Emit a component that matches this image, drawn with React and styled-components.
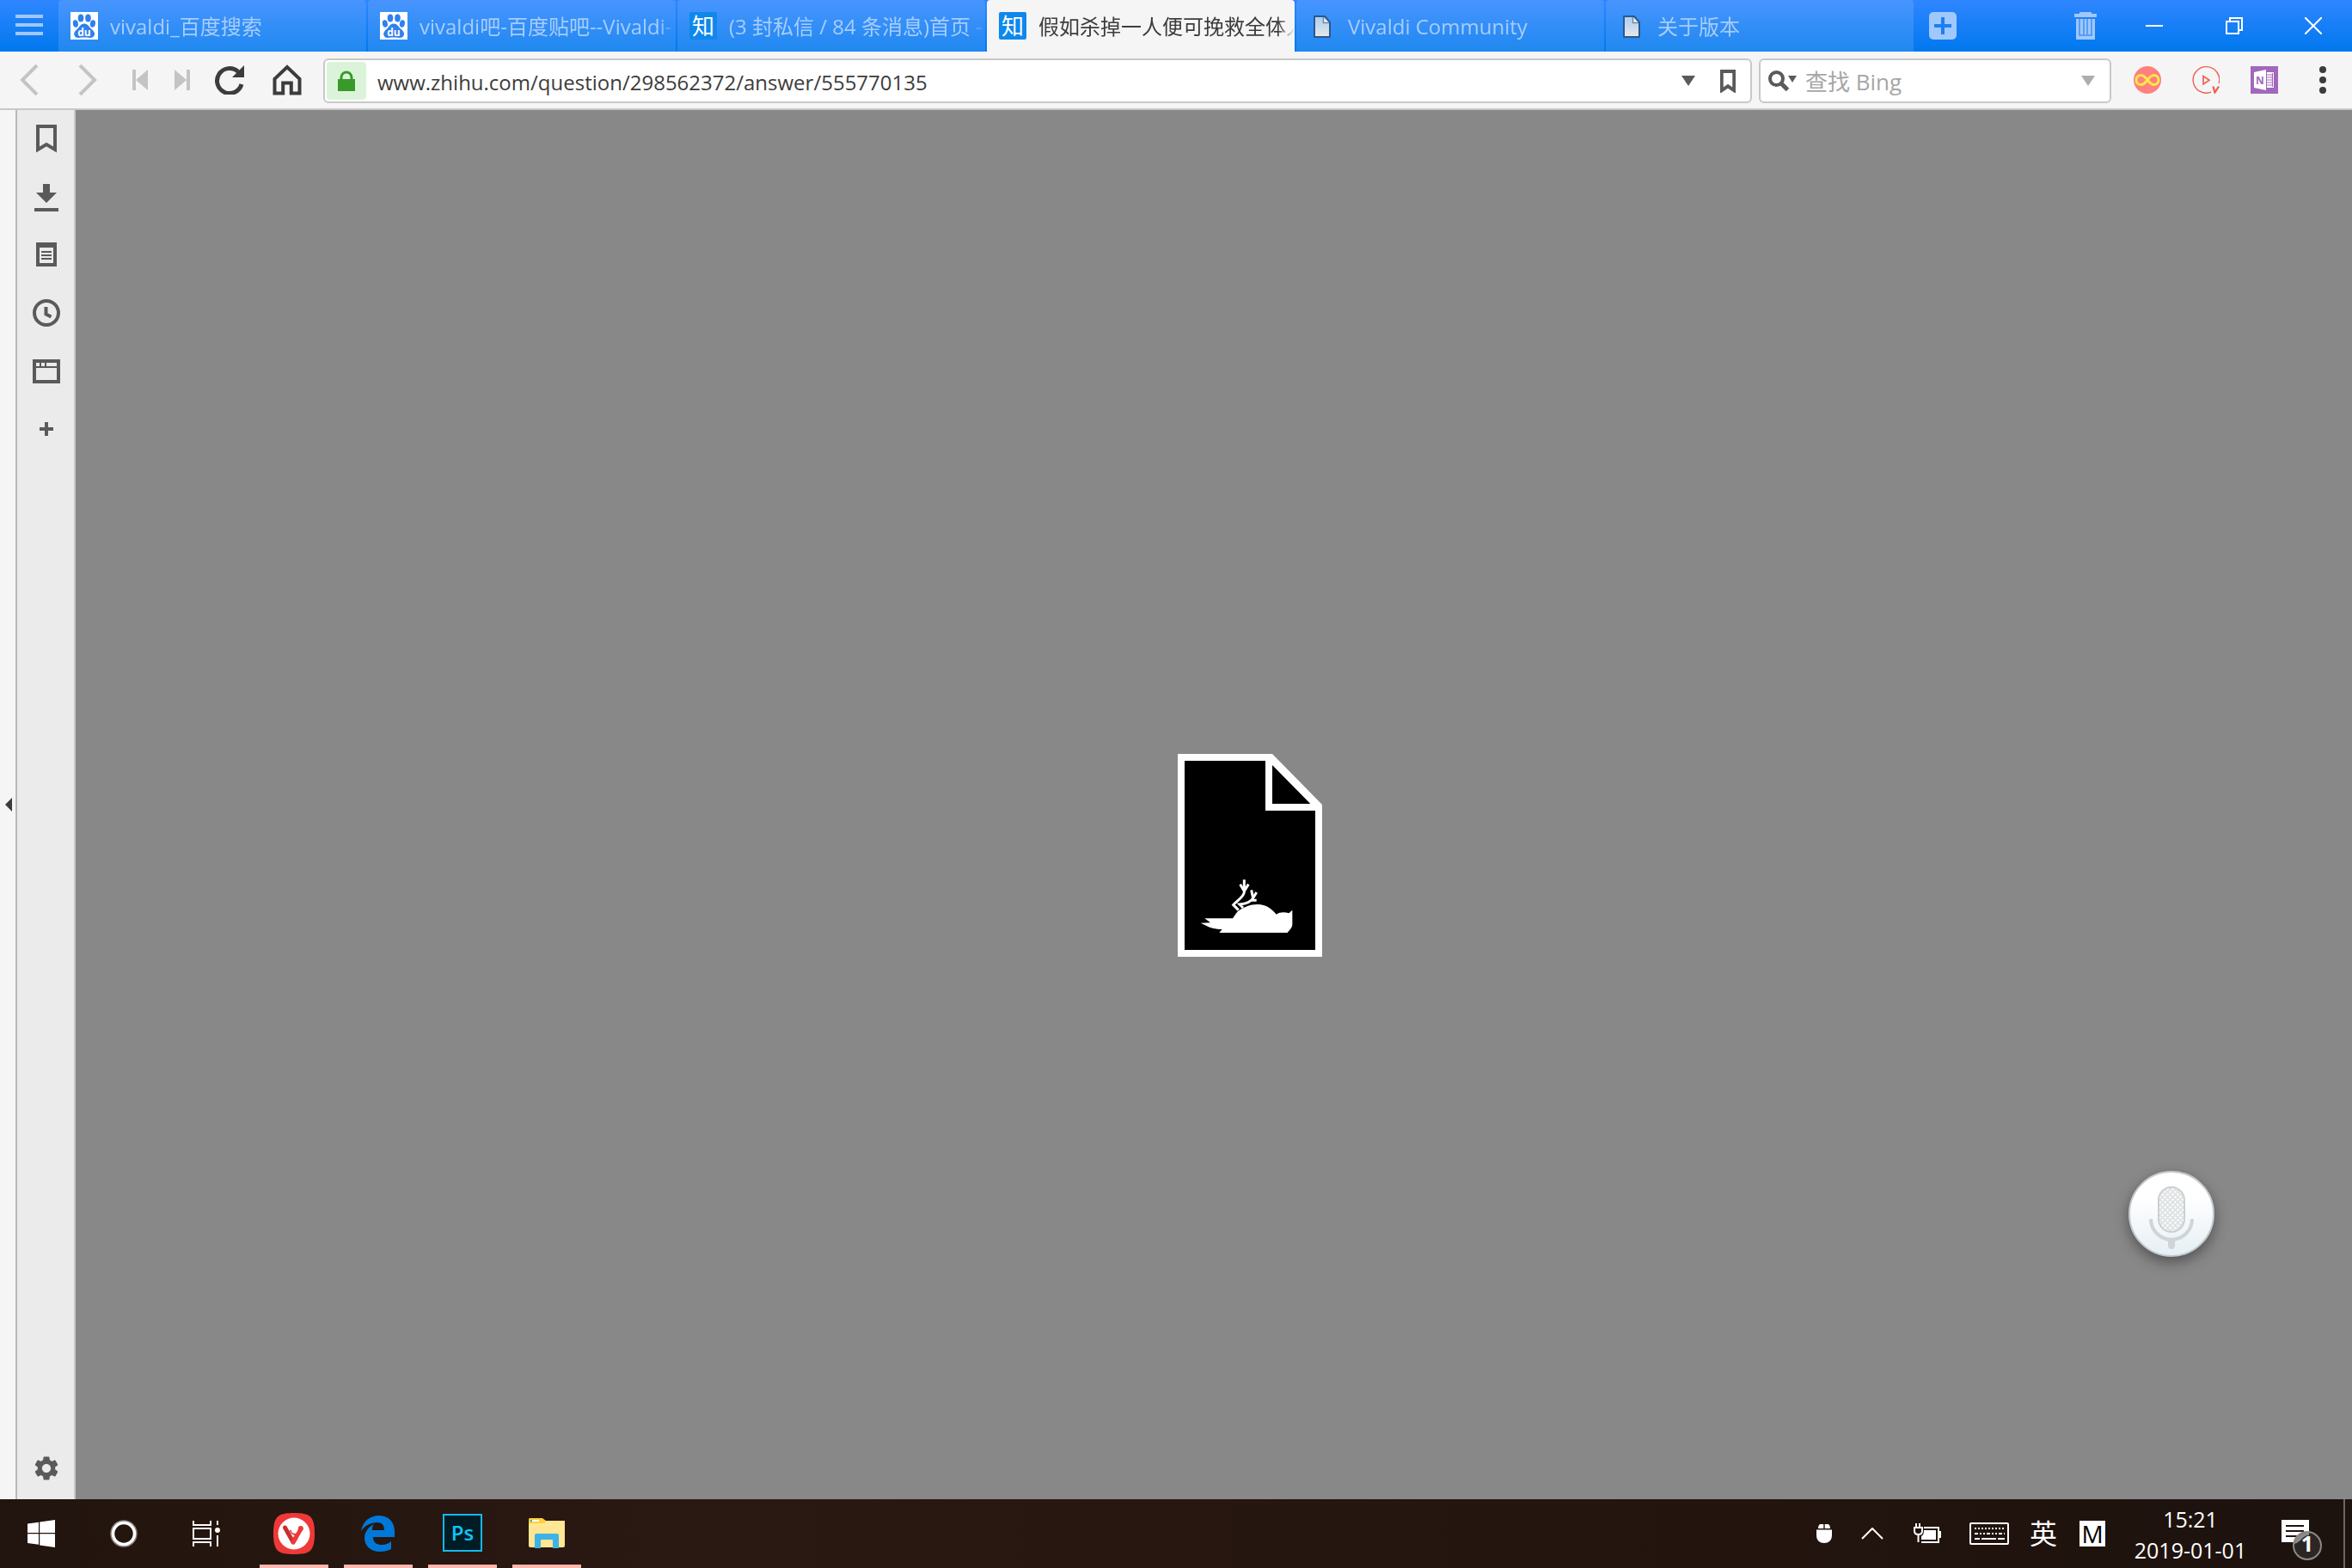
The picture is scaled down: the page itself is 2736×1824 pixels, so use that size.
import React from "react";
import styled, { createGlobalStyle, css } from "styled-components";
import { MdSettings } from "react-icons/md";

const GlobalStyle = createGlobalStyle`
  * { box-sizing: border-box; }
  body {
    margin: 0;
    font-family: "Open Sans", "Noto Sans CJK SC", sans-serif;
    font-size: 24px;
    color: #3c3c3c;
    background: #888;
  }
  button, input { font: inherit; color: inherit; }
  svg { display: block; flex: none; }
`;

const Screen = styled.div`
  min-height: 100vh;
  display: flex;
  flex-direction: column;
`;

/* ---------- tab bar ---------- */

const TabBar = styled.header`
  display: flex;
  height: 60px;
  background: linear-gradient(#2f86ff, #0078ee);
`;

const IconButton = styled.button`
  display: flex;
  align-items: center;
  justify-content: center;
  flex: none;
  width: ${(p) => p.$width || 68}px;
  height: ${(p) => (p.$height ? `${p.$height}px` : "auto")};
  padding: 0;
  border: 0;
  background: none;
  color: ${(p) => p.$color || "inherit"};
`;

const Tabs = styled.nav`
  display: flex;
  gap: 2px;
  min-width: 0;
`;

const Tab = styled.button`
  display: flex;
  align-items: center;
  gap: 14px;
  flex: 0 1 358px;
  width: 358px;
  min-width: 0;
  padding: 0 0 0 14px;
  border: 0;
  border-radius: 4px 4px 0 0;
  text-align: left;
  background: rgba(255, 255, 255, 0.12);
  color: #a6cdfb;
  ${(p) =>
    p.$active &&
    css`
      background: #f5f5f5;
      color: #3c3c3c;
    `}
`;

const TabTitle = styled.span`
  flex: 1;
  min-width: 0;
  overflow: hidden;
  white-space: nowrap;
  padding-top: 2px;
  line-height: 40px;
  mask-image: linear-gradient(to right, #000 calc(100% - 20px), transparent);
`;

const ZhihuMark = styled.span`
  display: flex;
  align-items: center;
  justify-content: center;
  flex: none;
  width: 32px;
  height: 32px;
  border-radius: 2px;
  background: #0f88eb;
  color: #fff;
  font-size: 26px;
  line-height: 32px;
`;

const Spacer = styled.div`
  flex: 1;
`;

/* ---------- toolbar ---------- */

const Toolbar = styled.div`
  display: flex;
  align-items: stretch;
  height: 68px;
  background: #f5f5f5;
  border-bottom: 2px solid #c8c8c8;
`;

const Field = styled.label`
  display: flex;
  align-items: center;
  height: 52px;
  margin: 8px 0 6px 8px;
  padding: 2px;
  border: 2px solid #c8c8c8;
  border-radius: 6px;
  background: #fff;
  flex: 1 1 0;
  min-width: 0;
`;

const SearchField = styled(Field)`
  flex: 0 0 410px;
  margin-right: 8px;
  font-size: 26px;
`;

const SecureBadge = styled.span`
  display: flex;
  align-items: center;
  justify-content: center;
  flex: none;
  width: 46px;
  height: 44px;
  border-radius: 4px;
  background: #dbf4d9;
`;

const TextInput = styled.input`
  flex: 1;
  min-width: 0;
  height: 44px;
  padding: 2px 0 0 ${(p) => p.$indent}px;
  border: 0;
  outline: 0;
  background: none;
  &::placeholder { color: #a6a6a6; opacity: 1; }
`;

/* ---------- body ---------- */

const Body = styled.div`
  flex: 1;
  display: flex;
`;

const PanelToggle = styled.button`
  display: flex;
  align-items: center;
  flex: none;
  width: 20px;
  padding: 0 0 0 6px;
  border: 0;
  border-right: 2px solid #b8b8b8;
  background: #f5f5f5;
`;

const Panel = styled.aside`
  display: flex;
  flex-direction: column;
  flex: none;
  gap: 4px;
  width: 68px;
  padding-bottom: 4px;
  border-right: 2px solid #c8c8c8;
  background: #ebebeb;
  color: #5a5a5a;
`;

const Page = styled.main`
  position: relative;
  flex: 1;
  display: flex;
  align-items: center;
  justify-content: center;
  padding: 118px 0 0 84px;
  background: #888;
`;

const MicButton = styled.button`
  position: absolute;
  right: 160px;
  bottom: 282px;
  width: 100px;
  height: 100px;
  padding: 0;
  border: 2px solid #c3c9ce;
  border-radius: 50%;
  background: linear-gradient(#fff 30%, #e6eff4);
  box-shadow: 0 6px 16px rgba(0, 0, 0, 0.4);
`;

/* ---------- taskbar ---------- */

const Taskbar = styled.footer`
  display: flex;
  height: 80px;
  background: linear-gradient(to right, #22140e, #2a1912 30%, #23140e 75%, #1c120e);
  color: #fff;
`;

const RunningApps = styled.div`
  display: flex;
  gap: 18px;
  padding-left: 14px;
`;

const AppButton = styled.button`
  display: flex;
  align-items: center;
  justify-content: center;
  width: 80px;
  padding: 4px 0 0;
  border: 0;
  border-bottom: 4px solid #ffb6ad;
  background: none;
`;

const PhotoshopMark = styled.span`
  display: flex;
  align-items: center;
  justify-content: center;
  width: 46px;
  height: 44px;
  margin-bottom: 2px;
  border: 2px solid #14b9ee;
  background: #001d26;
  color: #10c4f8;
  font-weight: 600;
  line-height: 36px;
`;

const ImeText = styled.span`
  font-size: 32px;
  line-height: 40px;
`;

const ImeBox = styled.span`
  display: block;
  width: 30px;
  height: 30px;
  background: #fff;
  color: #000;
  font-size: 28px;
  line-height: 30px;
  text-align: center;
`;

const Clock = styled.button`
  flex: none;
  width: 160px;
  padding: 2px 0 0;
  border: 0;
  background: none;
  font-size: 25px;
  line-height: 36px;
  text-align: center;
`;

const ShowDesktop = styled.button`
  width: 10px;
  margin-left: 14px;
  padding: 0;
  border: 0;
  border-left: 2px solid #6d6562;
  background: none;
`;

/* ---------- drawings ---------- */

const Baidu = () => (
  <svg width="32" height="32" viewBox="0 0 32 32">
    <path fill="#fff" d="M0 0h32v32H0z" />
    <g fill="#2f80ee">
      <ellipse cx="12" cy="7" rx="3.3" ry="4.6" />
      <ellipse cx="20.500" cy="7" rx="3.300" ry="4.600" />
      <ellipse cx="5.800" cy="13.500" rx="3" ry="4.300" transform="rotate(-10 6 13)" />
      <ellipse cx="26" cy="13.500" rx="3" ry="4.300" transform="rotate(10 26 13)" />
      <path d="M16 13.500c4 0 5.500 3.500 8 6 3.500 3 5 5 3.500 8-1.500 2.800-4 2.500-6.500 2.200-3.500-.4-6.500-.4-10 0-2.500.3-5 .6-6.300-2.200-1.300-3 .2-5 3.500-8 2.400-2.500 3.800-6 7.800-6z" />
    </g>
    <text x="16" y="27.500" fill="#fff" fontSize="12" fontWeight="700" textAnchor="middle" fontFamily="Open Sans">du</text>
  </svg>
);

const PageIcon = () => (
  <svg width="32" height="32" viewBox="0 0 32 32">
    <defs>
      <linearGradient id="sheet" x2="0" y2="1">
        <stop stopColor="#a9cdf3" />
        <stop offset="1" stopColor="#e8e8e8" />
      </linearGradient>
    </defs>
    <path d="M7 5h12l6 7v17H7z" fill="url(#sheet)" stroke="#2b5889" strokeWidth="2" strokeLinejoin="round" />
    <path d="M17.500 6v6.500H24" fill="#f3f3f3" stroke="#6f89a5" strokeWidth="1.500" />
  </svg>
);

const Triangle = ({ w, h, color }) => (
  <svg width={w} height={h} viewBox="0 0 16 12" preserveAspectRatio="none">
    <path d="M0 0h16L8 12z" fill={color} />
  </svg>
);

const Chevron = ({ flip }) => (
  <svg width="24" height="36" viewBox="0 0 24 36" transform={flip ? "scale(-1 1)" : undefined}>
    <path d="M21 1L4 18l17 17" fill="none" stroke="#c4c4c4" strokeWidth="4" />
  </svg>
);

const Skip = ({ flip }) => (
  <svg width="18" height="24" viewBox="0 0 18 24" transform={flip ? "scale(-1 1)" : undefined}>
    <path d="M0 0h4v24H0zM18 0v24L4 12z" fill="#c4c4c4" />
  </svg>
);

const Reload = () => (
  <svg width="34" height="34" viewBox="0 0 34 34">
    <path d="M27 7.500A14.500 14.500 0 1 0 31 22" fill="none" stroke="#3c3c3c" strokeWidth="5" />
    <path d="M34 0v14H20z" fill="#3c3c3c" />
  </svg>
);

const Home = () => (
  <svg width="36" height="36" viewBox="0 0 36 36">
    <path d="M3.500 33.500V16.800L18 3l14.500 13.800v16.700h-9.700v-12h-9.600v12z" fill="none" stroke="#3c3c3c" strokeWidth="4" />
  </svg>
);

const Lock = () => (
  <svg width="20" height="24" viewBox="0 0 20 24">
    <path d="M4 12V8a6 6 0 0 1 12 0v4" fill="none" stroke="#379a29" strokeWidth="3" />
    <path d="M0 10h20v14H0z" fill="#379a29" />
  </svg>
);

const BookmarkOutline = ({ w, h }) => (
  <svg width={w} height={h} viewBox="0 0 24 33" preserveAspectRatio="none">
    <path d="M2.500 2.500h19v27l-9.500-6-9.500 6z" fill="none" stroke="#5a5a5a" strokeWidth="5" />
  </svg>
);

const SearchIcon = () => (
  <svg width="34" height="24" viewBox="0 0 34 24">
    <circle cx="9.500" cy="9.500" r="7.500" fill="none" stroke="#5a5a5a" strokeWidth="4" />
    <path d="M14 14l8.500 8.500" stroke="#5a5a5a" strokeWidth="5" />
    <path d="M23 6h10l-5 8z" fill="#5a5a5a" />
  </svg>
);

const panelIcons = [
  ["书签", <svg key="a" width="32" height="36" viewBox="0 0 32 36"><path d="M6 5h20v27l-10-6-10 6z" fill="none" stroke="currentColor" strokeWidth="4" /></svg>],
  ["下载", <svg key="b" width="32" height="36" viewBox="0 0 32 36" fill="currentColor"><path d="M12 4h8v10h8L16 26 4 14h8zM2 32h28v4H2z" /></svg>],
  ["笔记", <svg key="c" width="32" height="36" viewBox="0 0 32 36"><path d="M6 6h20v24H6z" fill="none" stroke="currentColor" strokeWidth="4" /><path d="M6 9h20M10 15h12M10 19h12M10 23h12" stroke="currentColor" strokeWidth="2" /></svg>],
  ["历史", <svg key="d" width="32" height="36" viewBox="0 0 32 36" fill="none" stroke="currentColor" strokeWidth="4"><circle cx="16" cy="18" r="14" /><path d="M15.500 11v8.500l6 3" /></svg>],
  ["窗口", <svg key="e" width="32" height="36" viewBox="0 0 32 36"><path d="M2 6h28v24H2z" fill="none" stroke="currentColor" strokeWidth="4" /><path d="M2 13h28M9 6v7M15 6v7" stroke="currentColor" strokeWidth="2" /></svg>],
  ["添加网页面板", <svg key="f" width="32" height="36" viewBox="0 0 32 36"><path d="M8 17h16M16 9v16" stroke="currentColor" strokeWidth="4" /></svg>],
];

const DeadBird = () => (
  <svg width="168" height="236" viewBox="90 81 504 708">
    <path d="M90 81h330l174 177v531H90z" fill="#fff" />
    <path d="M114 105h282v174h174v486H114zM420 120v135h133z" fill="#000" />
    <path d="M170 671l34-1-20-15 98 0c6-8 10-16 18-25 20-14 42-24 68-24 32 0 50 16 66 35 14-9 28-9 44-4l12-11v50c0 12-10 20-17 29H235l10-12c-24-1-40-4-56-13z" fill="#fff" />
    <g fill="none" stroke="#fff" strokeWidth="9">
      <path d="M302 626l-18-18c10-14 34-24 38-44v-44M308 536l14 24 15-24" />
      <path d="M318 618l-12-12c20-2 40-8 47-22l-6-28M353 584l12-20M345 592h20" />
    </g>
  </svg>
);

const Mic = () => (
  <svg width="96" height="96" viewBox="0 0 96 96">
    <defs>
      <pattern id="grille" width="6" height="6" patternUnits="userSpaceOnUse">
        <path fill="#dfe3e4" d="M0 0h6v6H0z" />
        <circle cx="1.500" cy="1.500" r="1.200" fill="#fff" />
        <circle cx="4.500" cy="4.500" r="1.200" fill="#fff" />
      </pattern>
    </defs>
    <rect x="33" y="17" width="30" height="52" rx="15" fill="url(#grille)" stroke="#cbcfd1" strokeWidth="2" />
    <path d="M24 54a24 24 0 0 0 48 0" fill="none" stroke="#cfd4d7" strokeWidth="4" />
    <path d="M44 78h8v7a4 4 0 0 1-8 0z" fill="#cfd4d7" />
  </svg>
);

const InfinityLoop = () => (
  <svg width="32" height="32" viewBox="0 0 32 32">
    <circle cx="16" cy="16" r="16" fill="#ff8080" />
    <path d="M16 16c-3-4-5-5.500-7.500-5.500a5.500 5.500 0 0 0 0 11c2.500 0 4.500-1.500 7.500-5.500s5-5.500 7.500-5.500a5.500 5.500 0 0 1 0 11c-2.500 0-4.500-1.500-7.500-5.500z" fill="none" stroke="#ffe748" strokeWidth="3" />
  </svg>
);

const PlayV = () => (
  <svg width="32" height="32" viewBox="0 0 32 32">
    <path d="M31.200 20A15.300 15.300 0 1 0 22 30.200" fill="none" stroke="#ee604f" strokeWidth="1.400" />
    <path d="M13 11.500v9.500l7-4.700z" fill="none" stroke="#ee604f" strokeWidth="1.700" />
    <path d="M24.500 23.500l2 7 4.500-7" fill="none" stroke="#ee604f" strokeWidth="2.300" />
  </svg>
);

const OneNote = () => (
  <svg width="32" height="32" viewBox="0 0 32 32">
    <path fill="#a168bd" d="M0 0h32v32H0z" />
    <path d="M4 7l14-3v24L4 25z" fill="#fff" />
    <path d="M19 7h8v18h-8" fill="#fff" />
    <path d="M19 10h6M19 13h6M19 16h6M19 19h6M19 22h6M25.500 8v16" stroke="#a168bd" strokeWidth="1.200" />
    <text x="11" y="20.500" textAnchor="middle" fontSize="12" fontWeight="700" fill="#a168bd" fontFamily="Open Sans">N</text>
  </svg>
);

const Edge = () => (
  <svg width="40" height="42" viewBox="0 0 40 42">
    <path d="M0 18C2 7 10 0 21 0c12 0 18 9 18 18v7H14c0 7 5 9 10 9s9-2 11-4v9c-4 2-8 3-13 3C11 42 4 35 4 26c0-7 5-13 11-16-2 2-2 5-2 7h14c0-6-3-9-8-9C11 8 4 12 0 18z" fill="#0078d9" />
  </svg>
);

const Vivaldi = () => (
  <svg width="48" height="48" viewBox="0 0 48 48">
    <path d="M24 0c18 0 24 3 24 24s-6 24-24 24S0 45 0 24 6 0 24 0z" fill="#ef3939" />
    <circle cx="24" cy="24" r="18.500" fill="#fff" />
    <path d="M13.500 17l9.500 17 3.500-6" fill="none" stroke="#c8302f" strokeWidth="5" strokeLinecap="round" strokeLinejoin="round" />
    <path d="M23 34l9-15.500" stroke="#ef3939" strokeWidth="5" strokeLinecap="round" />
    <path d="M19.500 20c2 4 4 5 6.500 5 4 0 6-3 5-6" fill="none" stroke="#ef3939" strokeWidth="2" />
    <circle cx="31.800" cy="18" r="3" fill="#ef3939" />
    <circle cx="24.300" cy="20" r="3.500" fill="#fff" />
  </svg>
);

const Folder = () => (
  <svg width="42" height="36" viewBox="0 0 42 36">
    <path d="M0 3h42v29a2 2 0 0 1-2 2H2a2 2 0 0 1-2-2z" fill="#ffe693" />
    <path d="M1 0h15l4 3-2 3H0V1z" fill="#ffcf3a" />
    <path d="M4 3h8" stroke="#fff" strokeWidth="2" />
    <path d="M2 3h2" stroke="#2eaadc" strokeWidth="2" />
    <path d="M7 35V20a2 2 0 0 1 2-2h24a2 2 0 0 1 2 2v15h-7V25H14v10z" fill="#3cb3e4" />
  </svg>
);

const tabs = [
  { title: "vivaldi_百度搜索", icon: <Baidu /> },
  { title: "vivaldi吧-百度贴吧--Vivaldi-", icon: <Baidu /> },
  { title: "(3 封私信 / 84 条消息)首页 -", icon: <ZhihuMark>知</ZhihuMark> },
  { title: "假如杀掉一人便可挽救全体人", icon: <ZhihuMark>知</ZhihuMark>, active: true },
  { title: "Vivaldi Community", icon: <PageIcon /> },
  { title: "关于版本", icon: <PageIcon /> },
];

export default function App() {
  return (
    <Screen>
      <GlobalStyle />
      <TabBar>
        <IconButton aria-label="菜单" $color="#a0c8fa">
          <svg width="32" height="26" viewBox="0 0 32 26"><path d="M0 2h32M0 12h32M0 22h32" stroke="currentColor" strokeWidth="4" /></svg>
        </IconButton>
        <Tabs>
          {tabs.map((t) => (
            <Tab key={t.title} $active={t.active}>
              {t.icon}
              <TabTitle>{t.title}</TabTitle>
            </Tab>
          ))}
        </Tabs>
        <IconButton aria-label="新标签页" $color="#a0c8fa">
          <svg width="32" height="32" viewBox="0 0 32 32"><rect width="32" height="32" rx="5" fill="currentColor" /><path d="M6 16h20M16 6v20" stroke="#1a7ff8" strokeWidth="4" /></svg>
        </IconButton>
        <Spacer />
        <IconButton aria-label="已关闭的标签页" $color="#a0c8fa">
          <svg width="26" height="32" viewBox="0 0 26 32">
            <path d="M6 0h14v2h6v4H0V2h6zM2 8h22v24H2z" fill="currentColor" />
            <path d="M6 8v19h14V8M11 8v18M15 8v18" fill="none" stroke="#3f90f7" strokeWidth="1.500" />
          </svg>
        </IconButton>
        <IconButton aria-label="最小化" $width={92} $color="#fff">
          <svg width="20" height="20" viewBox="0 0 20 20"><path d="M0 10h20" stroke="currentColor" strokeWidth="2" /></svg>
        </IconButton>
        <IconButton aria-label="还原" $width={94} $color="#fff">
          <svg width="20" height="20" viewBox="0 0 20 20"><path d="M1 5h14v14H1zM5 5V1h14v14h-4" fill="none" stroke="currentColor" strokeWidth="2" /></svg>
        </IconButton>
        <IconButton aria-label="关闭" $width={90} $color="#fff">
          <svg width="20" height="20" viewBox="0 0 20 20"><path d="M0 0l20 20M20 0L0 20" stroke="currentColor" strokeWidth="2" /></svg>
        </IconButton>
      </TabBar>

      <Toolbar>
        <IconButton aria-label="后退"><Chevron /></IconButton>
        <IconButton aria-label="前进"><Chevron flip /></IconButton>
        <IconButton aria-label="快退" $width={54}><Skip /></IconButton>
        <IconButton aria-label="快进" $width={44}><Skip flip /></IconButton>
        <IconButton aria-label="重新加载" $width={66}><Reload /></IconButton>
        <IconButton aria-label="主页"><Home /></IconButton>
        <Field>
          <SecureBadge><Lock /></SecureBadge>
          <TextInput $indent={13} aria-label="地址" defaultValue="www.zhihu.com/question/298562372/answer/555770135" />
          <IconButton as="span" $width={44}><Triangle w={16} h={12} color="#5a5a5a" /></IconButton>
          <IconButton as="span" $width={48}><BookmarkOutline w={18} h={27} /></IconButton>
        </Field>
        <SearchField>
          <IconButton as="span" $width={48}><SearchIcon /></IconButton>
          <TextInput $indent={2} aria-label="搜索" placeholder="查找 Bing" />
          <IconButton as="span" $width={46}><Triangle w={16} h={12} color="#adadad" /></IconButton>
        </SearchField>
        <IconButton aria-label="扩展"><InfinityLoop /></IconButton>
        <IconButton aria-label="视频扩展"><PlayV /></IconButton>
        <IconButton aria-label="OneNote"><OneNote /></IconButton>
        <IconButton aria-label="更多">
          <svg width="8" height="32" viewBox="0 0 8 32" fill="#3c3c3c"><circle cx="4" cy="4" r="4" /><circle cx="4" cy="16" r="4" /><circle cx="4" cy="28" r="4" /></svg>
        </IconButton>
      </Toolbar>

      <Body>
        <PanelToggle aria-label="切换面板">
          <svg width="8" height="16" viewBox="0 0 8 16"><path d="M8 0v16L0 8z" fill="#3c3c3c" /></svg>
        </PanelToggle>
        <Panel>
          {panelIcons.map(([label, icon]) => (
            <IconButton key={label} aria-label={label} $height={64}>{icon}</IconButton>
          ))}
          <Spacer />
          <IconButton aria-label="设置" $height={64}><MdSettings size={34} /></IconButton>
        </Panel>
        <Page>
          <DeadBird />
          <MicButton aria-label="语音"><Mic /></MicButton>
        </Page>
      </Body>

      <Taskbar>
        <IconButton aria-label="开始" $width={96}>
          <svg width="32" height="32" viewBox="0 0 32 32" fill="#fff"><path d="M0 4.500L13 2.700V15H0zM14.200 2.500L32 0v15H14.200zM0 16.200h13v12.600L0 27zM14.200 16.200H32V32l-17.800-2.500z" /></svg>
        </IconButton>
        <IconButton aria-label="Cortana" $width={96}>
          <svg width="32" height="32" viewBox="0 0 32 32" fill="none"><circle cx="16" cy="16" r="14" stroke="#8a8380" strokeWidth="3.500" /><circle cx="16" cy="16" r="12.500" stroke="#fff" strokeWidth="3.500" /></svg>
        </IconButton>
        <IconButton aria-label="任务视图" $width={96}>
          <svg width="32" height="30" viewBox="0 0 32 30" fill="none" stroke="#fff" strokeWidth="2"><path d="M1 0v5h20V0M1 9h20v12H1zM1 30v-5h20v5M29 0v5M29 17v13" /><circle cx="29" cy="11" r="3" fill="#fff" stroke="none" /></svg>
        </IconButton>
        <RunningApps>
          <AppButton aria-label="Vivaldi"><Vivaldi /></AppButton>
          <AppButton aria-label="Edge"><Edge /></AppButton>
          <AppButton aria-label="Photoshop"><PhotoshopMark>Ps</PhotoshopMark></AppButton>
          <AppButton aria-label="文件资源管理器"><Folder /></AppButton>
        </RunningApps>
        <Spacer />
        <IconButton aria-label="鼠标" $width={48}>
          <svg width="18" height="22" viewBox="0 0 18 22" fill="#fff"><path d="M8.300 0v5H2c0-3 1-5 3-5zM9.700 0H13c2 0 3 2 3 5H9.700zM0 6.500h18V13c0 6-4 9-9 9s-9-3-9-9z" /></svg>
        </IconButton>
        <IconButton aria-label="显示隐藏的图标" $width={64}>
          <svg width="26" height="14" viewBox="0 0 26 14"><path d="M1 13L13 1l12 12" fill="none" stroke="#fff" strokeWidth="2" /></svg>
        </IconButton>
        <IconButton aria-label="电源" $width={64}>
          <svg width="32" height="24" viewBox="0 0 32 24" fill="none" stroke="#fff" strokeWidth="2"><path d="M3 0v5M7 0v5M1 5h9v4c0 3-2 4-4.500 4S1 12 1 9zM5.500 13v9M12 5h17v17H9M31 9v8" /><path d="M12 8h14v11H9v-4c2-1 3-3 3-7z" fill="#fff" stroke="none" /></svg>
        </IconButton>
        <IconButton aria-label="触摸键盘" $width={80}>
          <svg width="46" height="26" viewBox="0 0 46 26" fill="none" stroke="#fff" strokeWidth="2"><rect x="1" y="1" width="44" height="24" rx="1" /><path d="M6 7h35" strokeDasharray="2 2" /><path d="M6 13h35" strokeDasharray="4 2 2 2 2 2" /><path d="M6 19h6M14 19h17M33 19h8" /></svg>
        </IconButton>
        <IconButton aria-label="输入语言" $width={46}><ImeText>英</ImeText></IconButton>
        <IconButton aria-label="输入法" $width={68}><ImeBox>M</ImeBox></IconButton>
        <Clock><div>15:21</div><div>2019-01-01</div></Clock>
        <IconButton aria-label="1 条新通知" $width={84}>
          <svg width="84" height="80" viewBox="0 0 84 80">
            <path d="M26 24h32v26H47l-7 7v-7H26z" fill="#fff" />
            <path d="M31 31h21M31 37h21M31 43h14" stroke="#20140f" strokeWidth="2" />
            <circle cx="56" cy="54" r="16" fill="#2c2725" stroke="#8d8987" strokeWidth="2" />
            <path d="M41 52a15 15 0 0 1 17-13v3c-8 0-9 8-17 10z" fill="#8d8987" />
            <text x="56" y="61" textAnchor="middle" fontSize="25" fontWeight="700" fill="#fff" fontFamily="Open Sans">1</text>
          </svg>
        </IconButton>
        <ShowDesktop aria-label="显示桌面" />
      </Taskbar>
    </Screen>
  );
}
